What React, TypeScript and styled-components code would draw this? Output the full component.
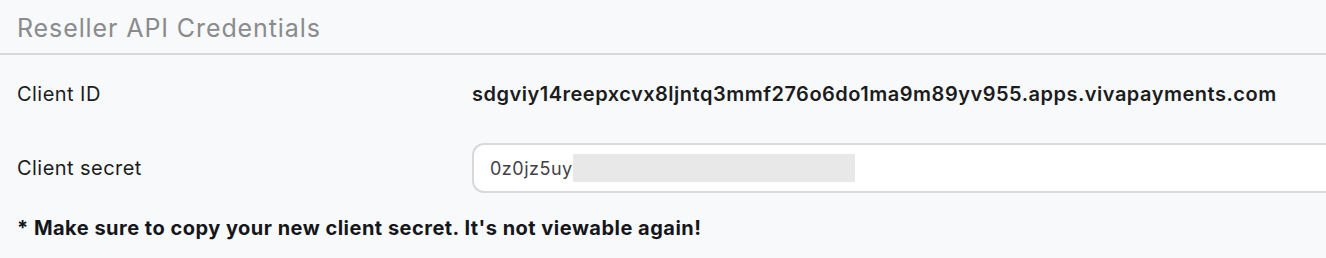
import React from "react";
import styled, { createGlobalStyle } from "styled-components";

const Global = createGlobalStyle`
  html, body { margin: 0; padding: 0; background: #f8f9fb; }
  body { font-family: Inter, "Noto Sans", sans-serif; overflow: hidden; }
`;

const Panel = styled.section`
  width: 1326px;
  height: 258px;
  background: #f8f9fb;
  display: flex;
  flex-direction: column;
  overflow: hidden;
`;

const Header = styled.div`
  height: 55px;
  box-sizing: border-box;
  border-bottom: 2px solid #d6d7d9;
  display: flex;
  align-items: center;
  padding: 3px 0 0 17px;
`;

const Title = styled.h2`
  margin: 0;
  font-size: 25px;
  font-weight: 400;
  color: #8a8b8d;
  letter-spacing: 0.9px;
`;

const Body = styled.div`
  display: flex;
  flex-direction: column;
  padding: 0 0 0 17px;
`;

const Row = styled.div<{ $h: number }>`
  display: grid;
  grid-template-columns: 455px 1fr;
  align-items: center;
  height: ${(p) => p.$h}px;
`;

const Label = styled.div`
  font-size: 20px;
  letter-spacing: 0.45px;
  color: #1b1c20;
`;

const Value = styled.div`
  font-size: 20px;
  letter-spacing: 0.5px;
  font-weight: 600;
  color: #1b1c20;
  white-space: nowrap;
`;

const SecretBox = styled.div`
  height: 50px;
  width: 900px;
  box-sizing: border-box;
  background: #fff;
  border: 2px solid #d8d9db;
  border-right: none;
  border-radius: 12px 0 0 12px;
  display: flex;
  align-items: center;
  padding-left: 16px;
`;

const SecretText = styled.span`
  font-size: 18px;
  letter-spacing: 0.5px;
  color: #414246;
  white-space: nowrap;
`;

const Mask = styled.span`
  display: inline-block;
  width: 282px;
  height: 28px;
  background: #e8e8e8;
`;

const Note = styled.p`
  margin: 0;
  font-size: 20px;
  letter-spacing: 0.49px;
  font-weight: 700;
  color: #15161a;
  padding-top: 13px;
`;

export default function App() {
  return (
    <>
      <Global />
      <Panel>
        <Header>
          <Title>Reseller API Credentials</Title>
        </Header>
        <Body>
          <Row $h={78}>
            <Label>Client ID</Label>
            <Value>sdgviy14reepxcvx8ljntq3mmf276o6do1ma9m89yv955.apps.vivapayments.com</Value>
          </Row>
          <Row $h={70}>
            <Label>Client secret</Label>
            <SecretBox>
              <SecretText>0z0jz5uy</SecretText>
              <Mask />
            </SecretBox>
          </Row>
          <Note>* Make sure to copy your new client secret. It's not viewable again!</Note>
        </Body>
      </Panel>
    </>
  );
}
